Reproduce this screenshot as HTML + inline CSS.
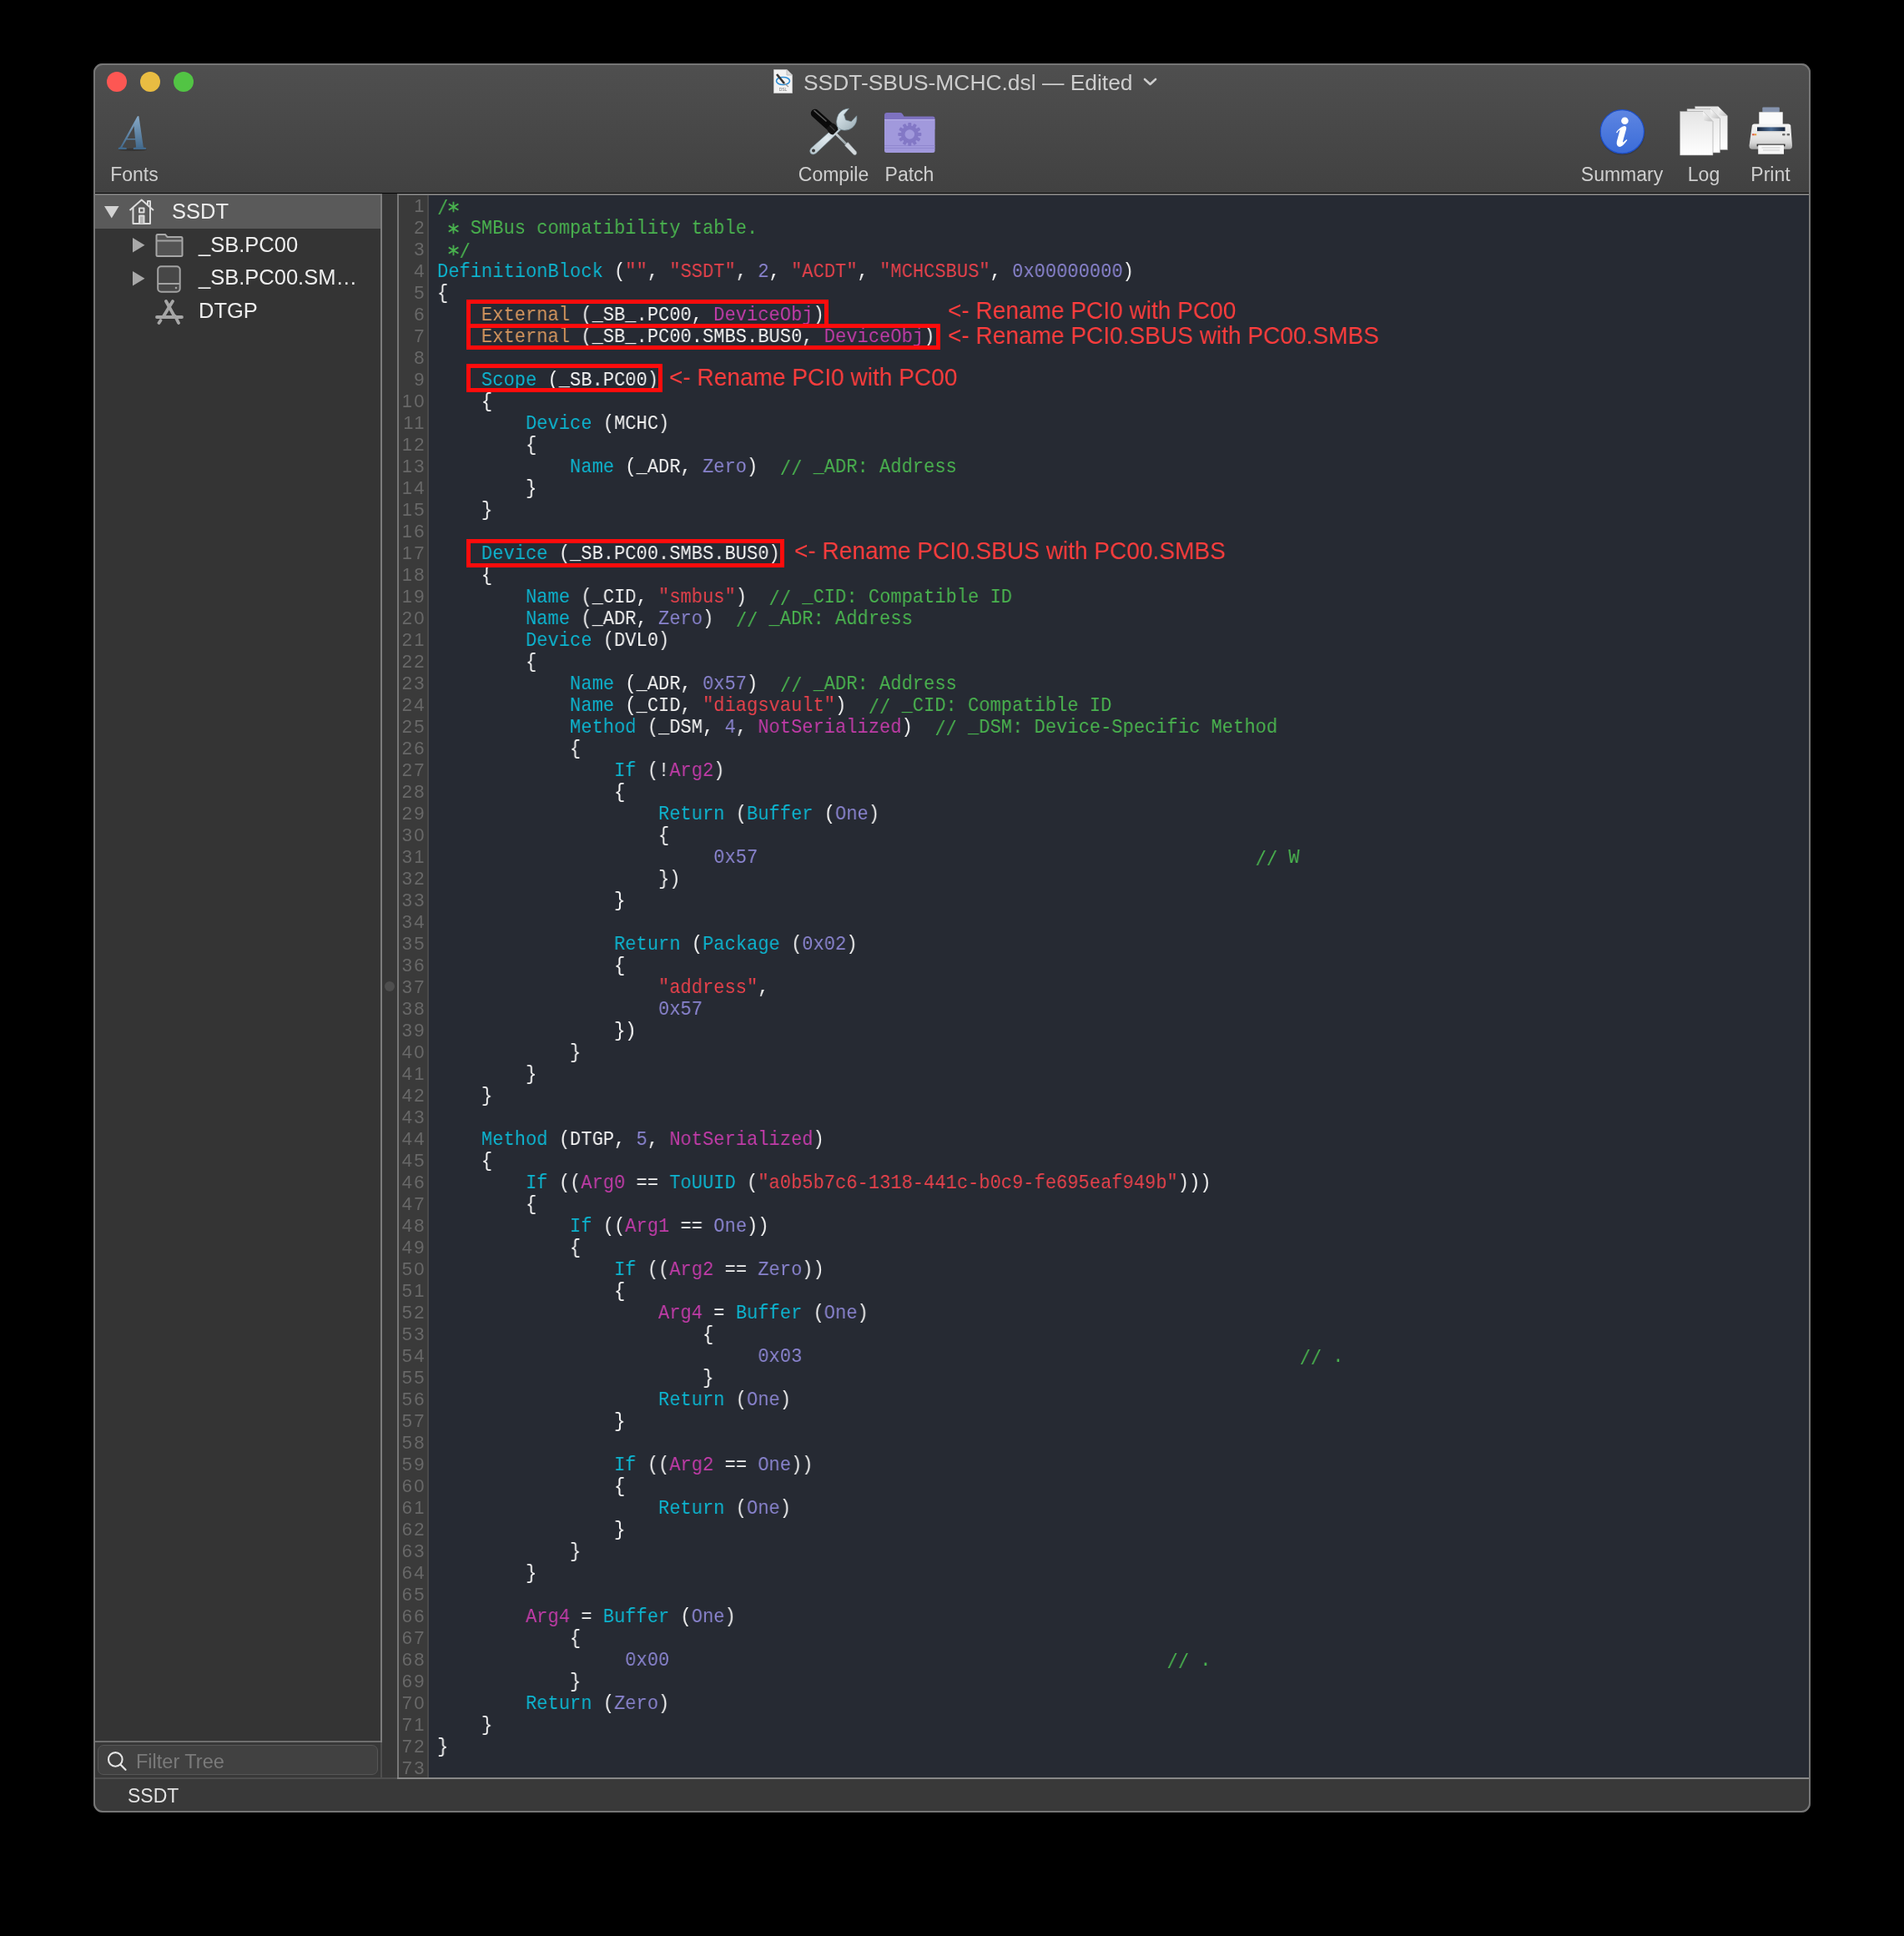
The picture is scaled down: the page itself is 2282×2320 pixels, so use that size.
<!DOCTYPE html>
<html><head><meta charset="utf-8">
<style>
*{margin:0;padding:0;box-sizing:border-box}
html,body{width:2282px;height:2320px;background:#000;overflow:hidden}
body{position:relative;font-family:"Liberation Sans",sans-serif}
.a{position:absolute;will-change:transform}
#win{left:112px;top:76px;width:2058px;height:2096px;border-radius:11px;overflow:hidden;background:#3a3a3a}
#frame{left:112px;top:76px;width:2058px;height:2096px;border-radius:11px;border:2px solid #767676;pointer-events:none}
#tb{left:0;top:0;width:2058px;height:155px;background:linear-gradient(#4f4f4f,#414141)}
#tbline{left:0;top:154.6px;width:2058px;height:1.6px;background:#050505}
.dot{width:24px;height:24px;border-radius:50%}
.lbl{font-size:23px;color:#cfcfcf;white-space:nowrap;line-height:1}
#title{font-size:26.4px;color:#cdcdcd;white-space:nowrap;line-height:1}
#side{left:2px;top:156px;width:342px;height:1855px;background:#343434}
#sideb{left:344px;top:156px;width:2px;height:1856px;background:#7e7e7e}
#filtR{left:344px;top:2012px;width:2px;height:43px;background:#4f4f4f}
#split{left:346px;top:156px;width:18px;height:1899px;background:#373737}
#topb1{left:2px;top:156px;width:344px;height:2px;background:#7a7a7a}
#topb2{left:364px;top:156px;width:1694px;height:2px;background:#7a7a7a}
#gut{left:364px;top:156px;width:38px;height:1899px;background:#3a3a3a;border-left:2px solid #777;border-right:2px solid #4a4a4a}
#code{left:402px;top:158px;width:1654px;height:1896px;background:#262a33}
#codeR{left:2056px;top:156px;width:2px;height:1900px;background:#888}
#codeB{left:364px;top:2054px;width:1694px;height:2px;background:#888}
#statB{left:2px;top:2054px;width:362px;height:2px;background:#4e4e4e}
#filt{left:2px;top:2010px;width:342px;height:45px;background:#383838;border-top:2px solid #6f6f6f}
#status{left:0;top:2056px;width:2058px;height:40px;background:#393939}
.row{left:2px;width:342px;height:40px}
.st{font-size:25.5px;color:#eeeeee;white-space:nowrap;line-height:1}
#nums{left:364px;top:158px;width:35px;font-size:22px;line-height:26px;color:#686868;text-align:right;white-space:pre;letter-spacing:2.4px}
#pre{left:412px;top:159px;font-family:"Liberation Mono",monospace;font-size:24px;line-height:26px;white-space:pre;color:#f4f4f4;transform:scaleX(0.92);transform-origin:0 0}
#pre i{font-style:normal}
.ast{overflow:visible;vertical-align:baseline}
.sl{font-weight:normal;display:inline-block;transform:translateY(2.5px)}
.k{color:#0db5d0}.e{color:#d6975f}.m{color:#c23ca9}.n{color:#8a84cf}.s{color:#e8424c}.c{color:#4ab44f}
.box{border:5px solid #fe0c0c}
.ann{transform:scaleX(0.935);transform-origin:0 0;font-size:30px;color:#ff3d3d;white-space:nowrap;line-height:1}
</style></head><body>
<div id="win" class="a">
  <div id="tb" class="a"></div>
  <div id="tbline" class="a"></div>
  <div class="a dot" style="left:16px;top:10px;background:#fd5753"></div>
  <div class="a dot" style="left:56px;top:10px;background:#e9bc42"></div>
  <div class="a dot" style="left:96px;top:10px;background:#52c444"></div>

  <div id="side" class="a"></div>
  <div id="sideb" class="a"></div>
  <div id="split" class="a"></div>
  <div id="gut" class="a"></div>
  <div id="code" class="a"></div>
  <div id="codeR" class="a"></div>
  <div id="codeB" class="a"></div>
  <div id="filt" class="a"></div>
  <div id="status" class="a"></div>
  <div id="topb1" class="a"></div>
  <div id="topb2" class="a"></div>
  <div id="filtR" class="a"></div>
  <div id="statB" class="a"></div>

  <div id="nums" class="a">1
2
3
4
5
6
7
8
9
10
11
12
13
14
15
16
17
18
19
20
21
22
23
24
25
26
27
28
29
30
31
32
33
34
35
36
37
38
39
40
41
42
43
44
45
46
47
48
49
50
51
52
53
54
55
56
57
58
59
60
61
62
63
64
65
66
67
68
69
70
71
72
73</div>
  <div id="pre" class="a"><i class="c"><b class="sl">/</b><svg class="ast" width="14.4" height="1" viewBox="0 0 14.4 1"><path d="M7.2 -11.3 V1.3 M0.9 -8.6 L13.5 -1.4 M0.9 -1.4 L13.5 -8.6" stroke="#4ab44f" stroke-width="1.9"/></svg></i>
<i class="c"> <svg class="ast" width="14.4" height="1" viewBox="0 0 14.4 1"><path d="M7.2 -11.3 V1.3 M0.9 -8.6 L13.5 -1.4 M0.9 -1.4 L13.5 -8.6" stroke="#4ab44f" stroke-width="1.9"/></svg> SMBus compatibility table.</i>
<i class="c"> <svg class="ast" width="14.4" height="1" viewBox="0 0 14.4 1"><path d="M7.2 -11.3 V1.3 M0.9 -8.6 L13.5 -1.4 M0.9 -1.4 L13.5 -8.6" stroke="#4ab44f" stroke-width="1.9"/></svg><b class="sl">/</b></i>
<i class="k">DefinitionBlock</i> (<i class="s">&quot;&quot;</i>, <i class="s">&quot;SSDT&quot;</i>, <i class="n">2</i>, <i class="s">&quot;ACDT&quot;</i>, <i class="s">&quot;MCHCSBUS&quot;</i>, <i class="n">0x00000000</i>)
{
    <i class="e">External</i> (_SB_.PC00, <i class="m">DeviceObj</i>)
    <i class="e">External</i> (_SB_.PC00.SMBS.BUS0, <i class="m">DeviceObj</i>)

    <i class="k">Scope</i> (_SB.PC00)
    {
        <i class="k">Device</i> (MCHC)
        {
            <i class="k">Name</i> (_ADR, <i class="n">Zero</i>)  <i class="c"><b class="sl">/</b><b class="sl">/</b> _ADR: Address</i>
        }
    }

    <i class="k">Device</i> (_SB.PC00.SMBS.BUS0)
    {
        <i class="k">Name</i> (_CID, <i class="s">&quot;smbus&quot;</i>)  <i class="c"><b class="sl">/</b><b class="sl">/</b> _CID: Compatible ID</i>
        <i class="k">Name</i> (_ADR, <i class="n">Zero</i>)  <i class="c"><b class="sl">/</b><b class="sl">/</b> _ADR: Address</i>
        <i class="k">Device</i> (DVL0)
        {
            <i class="k">Name</i> (_ADR, <i class="n">0x57</i>)  <i class="c"><b class="sl">/</b><b class="sl">/</b> _ADR: Address</i>
            <i class="k">Name</i> (_CID, <i class="s">&quot;diagsvault&quot;</i>)  <i class="c"><b class="sl">/</b><b class="sl">/</b> _CID: Compatible ID</i>
            <i class="k">Method</i> (_DSM, <i class="n">4</i>, <i class="m">NotSerialized</i>)  <i class="c"><b class="sl">/</b><b class="sl">/</b> _DSM: Device-Specific Method</i>
            {
                <i class="k">If</i> (!<i class="m">Arg2</i>)
                {
                    <i class="k">Return</i> (<i class="k">Buffer</i> (<i class="n">One</i>)
                    {
                         <i class="n">0x57</i>                                             <i class="c"><b class="sl">/</b><b class="sl">/</b> W</i>
                    })
                }

                <i class="k">Return</i> (<i class="k">Package</i> (<i class="n">0x02</i>)
                {
                    <i class="s">&quot;address&quot;</i>, 
                    <i class="n">0x57</i>
                })
            }
        }
    }

    <i class="k">Method</i> (DTGP, <i class="n">5</i>, <i class="m">NotSerialized</i>)
    {
        <i class="k">If</i> ((<i class="m">Arg0</i> == <i class="k">ToUUID</i> (<i class="s">&quot;a0b5b7c6-1318-441c-b0c9-fe695eaf949b&quot;</i>)))
        {
            <i class="k">If</i> ((<i class="m">Arg1</i> == <i class="n">One</i>))
            {
                <i class="k">If</i> ((<i class="m">Arg2</i> == <i class="n">Zero</i>))
                {
                    <i class="m">Arg4</i> = <i class="k">Buffer</i> (<i class="n">One</i>)
                        {
                             <i class="n">0x03</i>                                             <i class="c"><b class="sl">/</b><b class="sl">/</b> .</i>
                        }
                    <i class="k">Return</i> (<i class="n">One</i>)
                }

                <i class="k">If</i> ((<i class="m">Arg2</i> == <i class="n">One</i>))
                {
                    <i class="k">Return</i> (<i class="n">One</i>)
                }
            }
        }

        <i class="m">Arg4</i> = <i class="k">Buffer</i> (<i class="n">One</i>)
            {
                 <i class="n">0x00</i>                                             <i class="c"><b class="sl">/</b><b class="sl">/</b> .</i>
            }
        <i class="k">Return</i> (<i class="n">Zero</i>)
    }
}
</div>

  <!-- title -->
  <svg class="a" style="left:815px;top:7px" width="23" height="29" viewBox="0 0 23 29">
    <path d="M0.5 0.5 H16 L22.5 7 V28.5 H0.5 Z" fill="#f2f2f2" stroke="#bdbdbd" stroke-width="1"/>
    <path d="M16 0.5 V7 H22.5" fill="#dcdcdc" stroke="#bdbdbd" stroke-width="1"/>
    <ellipse cx="11.5" cy="14" rx="8" ry="4.5" fill="none" stroke="#2f8fd6" stroke-width="1.6"/>
    <line x1="4" y1="6" x2="13" y2="17" stroke="#333" stroke-width="2.6"/>
    <line x1="13" y1="17" x2="18" y2="21" stroke="#999" stroke-width="1.2"/>
    <text x="11.5" y="26" font-size="5" text-anchor="middle" fill="#777" font-family="Liberation Sans">DSL</text>
  </svg>
  <div id="title" class="a" style="left:851px;top:9.6px">SSDT-SBUS-MCHC.dsl — Edited</div>
  <svg class="a" style="left:1258px;top:17px" width="17" height="10" viewBox="0 0 17 10"><path d="M2 2 L8.5 8 L15 2" fill="none" stroke="#cdcdcd" stroke-width="2.6" stroke-linecap="round" stroke-linejoin="round"/></svg>

  <!-- toolbar items -->
  <svg class="a" style="left:28px;top:62px" width="38" height="44" viewBox="0 0 38 44">
    <defs><linearGradient id="ag" x1="0" y1="0" x2="0" y2="1"><stop offset="0" stop-color="#86a8c6"/><stop offset="1" stop-color="#40678a"/></linearGradient></defs>
    <ellipse cx="19" cy="41.3" rx="17" ry="1.6" fill="#222" opacity="0.45"/>
    <path d="M24.6 1.6 Q25.6 0.8 26.4 1.3 L31.9 38.6 L35 39 Q35.6 40.6 34.6 41 H20.2 Q19.4 40.6 19.9 39 L23.1 38.6 L22.2 29.6 H11.6 L6.4 38.6 L11.6 39 Q12.2 40.6 11.4 41 H2.2 Q1.3 40.6 2 39 Q3.6 38.8 4.6 37.6 Z M12.6 27.9 H22 L20.6 13.2 Z" fill="url(#ag)"/>
  </svg>
  <div class="a lbl" style="left:-51.5px;width:200px;text-align:center;top:121.5px">Fonts</div>

  <svg class="a" style="left:858px;top:53px" width="58" height="58" viewBox="0 0 58 58">
    <defs>
      <linearGradient id="wr" x1="0" y1="0" x2="1" y2="1"><stop offset="0" stop-color="#e6f1f6"/><stop offset="1" stop-color="#9aacb4"/></linearGradient>
      <linearGradient id="wb" x1="0" y1="1" x2="1" y2="0"><stop offset="0" stop-color="#b9c8ce"/><stop offset="0.5" stop-color="#dfe9ee"/><stop offset="1" stop-color="#a4b5bc"/></linearGradient>
      <linearGradient id="sh" x1="0" y1="0" x2="1" y2="1"><stop offset="0" stop-color="#c9d1d4"/><stop offset="1" stop-color="#8e999d"/></linearGradient>
    </defs>
    <path d="M2.2 48.5 L37 17.5 L42 22.5 L8.2 54.5 Q4 57.5 1.5 54.5 Q-0.5 51.5 2.2 48.5 Z" fill="url(#wb)" stroke="#7d949e" stroke-width="0.7"/>
    <circle cx="5" cy="51.5" r="2" fill="#3a3a3a"/>
    <path d="M34.5 24 Q30.5 17 35 8 Q39.5 1.5 47.5 1 L41.5 8.3 L43.5 14.8 L50.2 16.8 L56.8 9.8 Q57.8 18.5 51.5 24 Q45.5 28.5 38.8 26.5 Z" fill="url(#wr)" stroke="#7d949e" stroke-width="0.7"/>
    <line x1="31" y1="30.5" x2="46.5" y2="46" stroke="url(#sh)" stroke-width="2.9"/>
    <path d="M43.8 43.2 L46.3 41.6 L56.6 53 Q57.4 55.5 55.5 56.6 Q53.5 57 52.6 55.8 L42.6 45.4 Z" fill="#d3d9dc" stroke="#8b969a" stroke-width="0.6"/>
    <line x1="6.8" y1="6.8" x2="23.5" y2="21.7" stroke="#0a0a0a" stroke-width="10" stroke-linecap="round"/>
    <line x1="6" y1="3.6" x2="20" y2="16" stroke="#5c5c5c" stroke-width="1.6" stroke-linecap="round"/>
    <path d="M21 24.5 L27 18.5 Q29.5 18.5 32.5 21.5 Q35 24.5 34.5 26.5 L28.5 32.5 Q26 32.5 23.5 30 Q21 27.5 21 24.5 Z" fill="#141414"/>
    <line x1="24.5" y1="21.5" x2="30.5" y2="27.5" stroke="#3c3c3c" stroke-width="1.1"/>
  </svg>
  <div class="a lbl" style="left:786.7px;width:200px;text-align:center;top:121.5px">Compile</div>

  <svg class="a" style="left:947.5px;top:58.5px" width="61" height="48" viewBox="0 0 61 48">
    <path d="M0 3 Q0 0 3 0 H19 Q21 0 22 2 L23.5 4.5 H58 Q60.5 4.5 60.5 7 V20 H0 Z" fill="#7e72c0"/>
    <rect x="0" y="8" width="60.5" height="40" rx="2.5" fill="#a199dc"/>
    <rect x="0" y="8" width="60.5" height="1.2" fill="#b5aee6"/>
    <rect x="0" y="39" width="60.5" height="1" fill="#9087cf"/><rect x="0" y="42" width="60.5" height="1" fill="#9087cf"/>
    <g transform="translate(30.3 26)" fill="#8378c6">
      <circle r="10.5"/>
      <g id="teeth"><rect x="-2" y="-14" width="4" height="5" rx="1"/><rect x="-2" y="9" width="4" height="5" rx="1"/><rect x="-14" y="-2" width="5" height="4" rx="1"/><rect x="9" y="-2" width="5" height="4" rx="1"/></g>
      <g transform="rotate(30)"><rect x="-2" y="-14" width="4" height="5" rx="1"/><rect x="-2" y="9" width="4" height="5" rx="1"/><rect x="-14" y="-2" width="5" height="4" rx="1"/><rect x="9" y="-2" width="5" height="4" rx="1"/></g>
      <g transform="rotate(60)"><rect x="-2" y="-14" width="4" height="5" rx="1"/><rect x="-2" y="9" width="4" height="5" rx="1"/><rect x="-14" y="-2" width="5" height="4" rx="1"/><rect x="9" y="-2" width="5" height="4" rx="1"/></g>
      <circle r="5.8" fill="#a199dc"/>
    </g>
  </svg>
  <div class="a lbl" style="left:877.9px;width:200px;text-align:center;top:121.5px">Patch</div>

  <svg class="a" style="left:1805px;top:54px" width="55" height="56" viewBox="0 0 55 56">
    <defs><linearGradient id="bl" x1="0" y1="0" x2="0" y2="1"><stop offset="0" stop-color="#5e86e2"/><stop offset="1" stop-color="#3b6cd8"/></linearGradient></defs>
    <ellipse cx="27.5" cy="29" rx="27" ry="27" fill="#1c2540" opacity="0.3"/>
    <circle cx="27.3" cy="27.8" r="26.1" fill="url(#bl)" stroke="#1d4fc9" stroke-width="1.2"/>
    <circle cx="30.4" cy="14.8" r="4.3" fill="#fff"/>
    <path d="M20 28.5 Q25 22 30 21.1 Q33 21.5 32 25 L28 39.5 Q27.8 41 29 40 L32.5 37 L33.3 38 Q28 45.5 24.5 46 Q19.8 46 20.8 39.5 L24.6 25.5 Q22 27 21 29.5 Z" fill="#fff"/>
  </svg>
  <div class="a lbl" style="left:1732.3px;width:200px;text-align:center;top:121.5px">Summary</div>

  <svg class="a" style="left:1901px;top:51px" width="59" height="60" viewBox="0 0 59 60">
    <defs><linearGradient id="pg" x1="0" y1="0" x2="0" y2="1"><stop offset="0" stop-color="#e4e4e4"/><stop offset="1" stop-color="#ffffff"/></linearGradient>
    <linearGradient id="cu" x1="0" y1="0" x2="1" y2="1"><stop offset="0" stop-color="#ffffff"/><stop offset="1" stop-color="#bdbdbd"/></linearGradient></defs>
    <path d="M18.5 0.5 H46 L57.5 12 V52.5 H18.5 Z" fill="url(#pg)" stroke="#9a9a9a" stroke-width="0.6"/>
    <path d="M46 0.5 Q47 9 47.5 11 Q50 11.8 57.5 12 Z" fill="url(#cu)"/>
    <path d="M9 3.5 H37 L48.5 15 V56 H9 Z" fill="url(#pg)" stroke="#9a9a9a" stroke-width="0.6"/>
    <path d="M37 3.5 Q38 12 38.5 14 Q41 14.8 48.5 15 Z" fill="url(#cu)"/>
    <path d="M0.5 6.5 H28 L40 18.5 V59 H0.5 Z" fill="url(#pg)" stroke="#9a9a9a" stroke-width="0.6"/>
    <path d="M28 6.5 Q29 15.5 29.5 17.5 Q32 18.3 40 18.5 Z" fill="url(#cu)"/>
  </svg>
  <div class="a lbl" style="left:1829.75px;width:200px;text-align:center;top:121.5px">Log</div>

  <svg class="a" style="left:1983.5px;top:51.5px" width="53" height="58" viewBox="0 0 53 58">
    <defs>
      <linearGradient id="pr" x1="0" y1="0" x2="0" y2="1"><stop offset="0" stop-color="#f4f4f4"/><stop offset="0.55" stop-color="#e4e4e4"/><stop offset="0.75" stop-color="#d6d6d6"/><stop offset="1" stop-color="#a4a4a4"/></linearGradient>
      <linearGradient id="sl" x1="0" y1="0" x2="1" y2="0"><stop offset="0" stop-color="#17243a"/><stop offset="0.5" stop-color="#4a6a92"/><stop offset="1" stop-color="#17243a"/></linearGradient>
    </defs>
    <rect x="16.3" y="0.4" width="20.5" height="6" rx="1" fill="#8593ad"/>
    <rect x="12.3" y="6.3" width="28.4" height="18" fill="#fafafa"/>
    <path d="M6.5 20.5 H47.4 Q49.6 20.5 50.2 22.6 L52 46.5 Q52 50.8 48.5 50.8 H4 Q0.5 50.8 0.5 46.5 L3.9 22.6 Q4.4 20.5 6.5 20.5 Z" fill="url(#pr)"/>
    <rect x="10" y="24.4" width="33.5" height="4.7" fill="url(#sl)"/>
    <rect x="10" y="29.1" width="33.5" height="1.2" fill="#cfcfcf"/>
    <rect x="4.1" y="32.3" width="2.6" height="2" fill="#e2553a"/><rect x="6.9" y="32.3" width="2.3" height="2" fill="#e8a03a"/>
    <rect x="40" y="32" width="3.6" height="2.4" rx="1" fill="#6a6a6a"/><rect x="45.5" y="32" width="3.6" height="2.4" rx="1" fill="#6a6a6a"/>
    <rect x="9.6" y="44.6" width="33.9" height="2.8" fill="#2e2e2e"/>
    <rect x="11.2" y="45.7" width="30.8" height="11" fill="#f6f6f6"/>
    <rect x="15.5" y="48.5" width="22" height="0.9" fill="#c9c9c9"/><rect x="17" y="51.5" width="20" height="0.9" fill="#c9c9c9"/>
  </svg>
  <div class="a lbl" style="left:1910.35px;width:200px;text-align:center;top:121.5px">Print</div>

  <!-- sidebar -->
  <div class="a" style="left:2px;top:158px;width:342px;height:40px;background:#5a5a5a"></div>
  <svg class="a" style="left:13px;top:170.5px" width="18" height="15" viewBox="0 0 18 15"><path d="M0 0 H17.6 L8.8 14.4 Z" fill="#d2d2d2"/></svg>
  <svg class="a" style="left:47px;top:209px" width="15" height="18" viewBox="0 0 15 18"><path d="M0 0 V17.6 L14.5 8.8 Z" fill="#a8a8a8"/></svg>
  <svg class="a" style="left:47px;top:249px" width="15" height="18" viewBox="0 0 15 18"><path d="M0 0 V17.6 L14.5 8.8 Z" fill="#a8a8a8"/></svg>

  <svg class="a" style="left:42px;top:162px" width="32" height="32" viewBox="0 0 32 32">
    <g fill="none" stroke="#dcdcdc" stroke-width="2" stroke-linejoin="round">
      <path d="M1.5 14 L15.7 1.5 L30 14"/>
      <path d="M5.5 11 V30 H26 V11"/>
      <path d="M23 8 V3 H26 V10.5"/>
      <rect x="13" y="11.5" width="5.5" height="5"/>
      <path d="M13 30 V20.5 H18.5 V30" fill="#b4b4b4"/>
    </g>
  </svg>
  <div class="a st" style="left:94.3px;top:164.7px">SSDT</div>

  <svg class="a" style="left:73.5px;top:203.5px" width="34" height="28" viewBox="0 0 34 28">
    <path d="M1.5 5 V2.5 Q1.5 1 3 1 H12 L14.5 4 H31 Q32.5 4 32.5 5.5 V26 Q32.5 27 31 27 H3 Q1.5 27 1.5 26 Z" fill="#545454" stroke="#a8a8a8" stroke-width="2"/>
    <path d="M1.5 8.5 H32.5" stroke="#a3a3a3" stroke-width="2"/>
  </svg>
  <div class="a st" style="left:125.7px;top:204.5px">_SB.PC00</div>

  <svg class="a" style="left:75.5px;top:241.5px" width="29" height="33" viewBox="0 0 29 33">
    <rect x="1.2" y="1.2" width="26.5" height="30.5" rx="4" fill="#474747" stroke="#a3a3a3" stroke-width="2"/>
    <path d="M1.2 22 H27.7" stroke="#a3a3a3" stroke-width="2"/>
    <circle cx="23" cy="27" r="1.3" fill="#a3a3a3"/>
  </svg>
  <div class="a st" style="left:125.7px;top:244.4px">_SB.PC00.SM…</div>

  <svg class="a" style="left:73.5px;top:283px" width="34" height="30" viewBox="0 0 34 30">
    <g stroke="#a6a6a6" stroke-width="3.8" stroke-linecap="round" fill="none">
      <path d="M13 2 L23 20"/><path d="M21 2 L10 20"/><path d="M2 21 H32"/><path d="M6.5 25 L4.5 28"/><path d="M24 20 L28 28"/>
    </g>
  </svg>
  <div class="a st" style="left:125.6px;top:284.3px">DTGP</div>

  <!-- filter -->
  <div class="a" style="left:5px;top:2015px;width:336px;height:36px;border-radius:7px;background:#414141;border:1px solid #565656"></div>
  <svg class="a" style="left:16px;top:2022px" width="26" height="26" viewBox="0 0 26 26"><circle cx="10.3" cy="10.4" r="8.3" fill="none" stroke="#e6e6e6" stroke-width="2.1"/><path d="M16.3 16.5 L22.5 22.8" stroke="#e6e6e6" stroke-width="2.3" stroke-linecap="round"/></svg>
  <div class="a lbl" style="left:50.5px;top:2023.5px;font-size:23.5px;color:#7a7a7a">Filter Tree</div>
  <div class="a" style="left:40.6px;top:2065px;font-size:23px;line-height:1;color:#e2e2e2">SSDT</div>

  <div class="a" style="left:349px;top:1100px;width:12px;height:12px;border-radius:50%;background:#4e4e4e"></div>

  <!-- annotations -->
  <div class="a box" style="left:447px;top:283px;width:434px;height:34px"></div>
  <div class="a box" style="left:447px;top:312px;width:568px;height:31px"></div>
  <div class="a box" style="left:447px;top:360px;width:235px;height:34px"></div>
  <div class="a box" style="left:447px;top:570px;width:381px;height:34px"></div>
  <div class="a ann" style="left:1023.5px;top:280.7px">&lt;- Rename PCI0 with PC00</div>
  <div class="a ann" style="left:1023.5px;top:311.1px">&lt;- Rename PCI0.SBUS with PC00.SMBS</div>
  <div class="a ann" style="left:690.4px;top:361px">&lt;- Rename PCI0 with PC00</div>
  <div class="a ann" style="left:839.8px;top:569.1px">&lt;- Rename PCI0.SBUS with PC00.SMBS</div>
</div>
<div id="frame" class="a"></div>
</body></html>
